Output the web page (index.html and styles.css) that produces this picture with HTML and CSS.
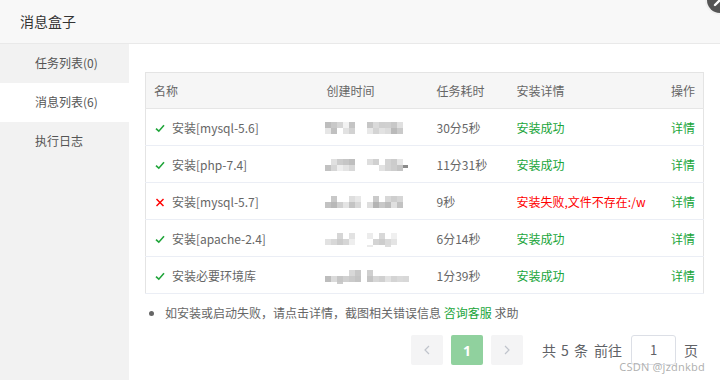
FILE: index.html
```html
<!DOCTYPE html>
<html lang="zh-CN">
<head>
<meta charset="utf-8">
<title>消息盒子</title>
<link rel="stylesheet" href="styles.css">
</head>
<body>
<div class="dialog">
  <div class="header">消息盒子</div>
  <div class="close"><svg width="26" height="26" viewBox="0 0 26 26"><line x1="8" y1="18" x2="18" y2="8" stroke="#fff" stroke-width="2.4" stroke-linecap="round"/><line x1="8" y1="8" x2="18" y2="18" stroke="#fff" stroke-width="2.4" stroke-linecap="round"/></svg></div>
  <div class="body">
    <ul class="side">
      <li class="side-item">任务列表(0)</li>
      <li class="side-item active">消息列表(6)</li>
      <li class="side-item">执行日志</li>
    </ul>
    <div class="main">
      <table class="tbl">
        <colgroup><col class="c1"><col class="c2"><col class="c3"><col class="c4"><col class="c5"></colgroup>
        <thead>
          <tr><th>名称</th><th>创建时间</th><th>任务耗时</th><th>安装详情</th><th class="r">操作</th></tr>
        </thead>
        <tbody>
          <tr>
            <td><svg class="ic" width="10" height="9" viewBox="0 0 10 9"><polyline points="1,4.6 3.8,7.2 9,1.2" fill="none" stroke="#20a53a" stroke-width="1.6"/></svg>安装[mysql-5.6]</td>
            <td><svg class="blur" width="84" height="14" viewBox="0 0 84 14"><rect x="0" y="0" width="6" height="6" fill="#bdbdbd"/><rect x="6" y="0" width="6" height="6" fill="#c8c8c8"/><rect x="12" y="0" width="6" height="6" fill="#d6d6d6"/><rect x="18" y="0" width="6" height="6" fill="#f2f2f2"/><rect x="24" y="0" width="6" height="6" fill="#c4c4c4"/><rect x="0" y="6" width="6" height="6" fill="#e6e6e6"/><rect x="6" y="6" width="6" height="6" fill="#c0c0c0"/><rect x="18" y="6" width="6" height="6" fill="#e2e2e2"/><rect x="24" y="6" width="6" height="6" fill="#d2d2d2"/><rect x="42" y="0" width="6" height="6" fill="#c6c6c6"/><rect x="48" y="0" width="6" height="6" fill="#dadada"/><rect x="54" y="0" width="6" height="6" fill="#cfcfcf"/><rect x="60" y="0" width="6" height="6" fill="#d0d0d0"/><rect x="66" y="0" width="6" height="6" fill="#c8c8c8"/><rect x="72" y="0" width="6" height="6" fill="#e0e0e0"/><rect x="42" y="6" width="6" height="6" fill="#e8e8e8"/><rect x="48" y="6" width="6" height="6" fill="#d4d4d4"/><rect x="54" y="6" width="6" height="6" fill="#e2e2e2"/><rect x="60" y="6" width="6" height="6" fill="#dcdcdc"/><rect x="66" y="6" width="6" height="6" fill="#bababa"/><rect x="72" y="6" width="6" height="6" fill="#cacaca"/></svg></td>
            <td>30分5秒</td>
            <td class="ok">安装成功</td>
            <td class="r link">详情</td>
          </tr>
          <tr>
            <td><svg class="ic" width="10" height="9" viewBox="0 0 10 9"><polyline points="1,4.6 3.8,7.2 9,1.2" fill="none" stroke="#20a53a" stroke-width="1.6"/></svg>安装[php-7.4]</td>
            <td><svg class="blur" width="84" height="14" viewBox="0 0 84 14"><rect x="6" y="0" width="6" height="6" fill="#e0e0e0"/><rect x="12" y="0" width="6" height="6" fill="#cccccc"/><rect x="18" y="0" width="6" height="6" fill="#c6c6c6"/><rect x="24" y="0" width="6" height="6" fill="#bebebe"/><rect x="0" y="6" width="6" height="6" fill="#c2c2c2"/><rect x="6" y="6" width="6" height="6" fill="#d6d6d6"/><rect x="12" y="6" width="6" height="6" fill="#eeeeee"/><rect x="18" y="6" width="6" height="6" fill="#e4e4e4"/><rect x="24" y="6" width="6" height="6" fill="#d8d8d8"/><rect x="42" y="0" width="6" height="6" fill="#dedede"/><rect x="48" y="0" width="6" height="6" fill="#d0d0d0"/><rect x="60" y="0" width="6" height="6" fill="#d4d4d4"/><rect x="66" y="0" width="6" height="6" fill="#cccccc"/><rect x="72" y="0" width="6" height="6" fill="#e6e6e6"/><rect x="54" y="6" width="6" height="6" fill="#e2e2e2"/><rect x="60" y="6" width="6" height="6" fill="#d4d4d4"/><rect x="66" y="6" width="6" height="6" fill="#cdcdcd"/><rect x="72" y="6" width="6" height="6" fill="#c4c4c4"/><rect x="78" y="6" width="5" height="3" fill="#8a8a8a"/></svg></td>
            <td>11分31秒</td>
            <td class="ok">安装成功</td>
            <td class="r link">详情</td>
          </tr>
          <tr>
            <td><svg class="ic" width="10" height="9" viewBox="0 0 10 9"><line x1="1.5" y1="1" x2="8.5" y2="8" stroke="#f00" stroke-width="1.5"/><line x1="8.5" y1="1" x2="1.5" y2="8" stroke="#f00" stroke-width="1.5"/></svg>安装[mysql-5.7]</td>
            <td><svg class="blur" width="84" height="14" viewBox="0 0 84 14"><rect x="6" y="0" width="6" height="6" fill="#c8c8c8"/><rect x="24" y="0" width="6" height="6" fill="#dedede"/><rect x="30" y="0" width="6" height="6" fill="#e8e8e8"/><rect x="48" y="0" width="6" height="6" fill="#cacaca"/><rect x="60" y="0" width="6" height="6" fill="#d8d8d8"/><rect x="66" y="0" width="6" height="6" fill="#cecece"/><rect x="0" y="6" width="6" height="6" fill="#c2c2c2"/><rect x="6" y="6" width="6" height="6" fill="#b8b8b8"/><rect x="12" y="6" width="6" height="6" fill="#d0d0d0"/><rect x="18" y="6" width="6" height="6" fill="#e4e4e4"/><rect x="24" y="6" width="6" height="6" fill="#c4c4c4"/><rect x="30" y="6" width="6" height="6" fill="#d8d8d8"/><rect x="42" y="6" width="6" height="6" fill="#dedede"/><rect x="48" y="6" width="6" height="6" fill="#b4b4b4"/><rect x="54" y="6" width="6" height="6" fill="#c8c8c8"/><rect x="60" y="6" width="6" height="6" fill="#bcbcbc"/><rect x="66" y="6" width="6" height="6" fill="#e0e0e0"/><rect x="72" y="6" width="6" height="6" fill="#c2c2c2"/><rect x="72" y="0" width="6" height="6" fill="#d6d6d6"/></svg></td>
            <td>9秒</td>
            <td class="err"><div class="clip">安装失败,文件不存在:/w</div></td>
            <td class="r link">详情</td>
          </tr>
          <tr>
            <td><svg class="ic" width="10" height="9" viewBox="0 0 10 9"><polyline points="1,4.6 3.8,7.2 9,1.2" fill="none" stroke="#20a53a" stroke-width="1.6"/></svg>安装[apache-2.4]</td>
            <td><svg class="blur" width="84" height="14" viewBox="0 0 84 14"><rect x="12" y="0" width="6" height="6" fill="#d6d6d6"/><rect x="24" y="0" width="6" height="6" fill="#e2e2e2"/><rect x="0" y="6" width="6" height="6" fill="#e2e2e2"/><rect x="6" y="6" width="6" height="6" fill="#d8d8d8"/><rect x="12" y="6" width="6" height="6" fill="#cccccc"/><rect x="18" y="6" width="6" height="6" fill="#d6d6d6"/><rect x="24" y="6" width="6" height="6" fill="#eeeeee"/><rect x="42" y="0" width="6" height="6" fill="#ececec"/><rect x="54" y="0" width="6" height="6" fill="#d8d8d8"/><rect x="66" y="0" width="6" height="6" fill="#f0f0f0"/><rect x="48" y="6" width="6" height="6" fill="#d4d4d4"/><rect x="54" y="6" width="6" height="6" fill="#cdcdcd"/><rect x="60" y="6" width="6" height="6" fill="#dadada"/><rect x="66" y="6" width="6" height="6" fill="#e4e4e4"/><rect x="42" y="12" width="6" height="2" fill="#eaeaea"/><rect x="60" y="12" width="6" height="2" fill="#dddddd"/></svg></td>
            <td>6分14秒</td>
            <td class="ok">安装成功</td>
            <td class="r link">详情</td>
          </tr>
          <tr>
            <td><svg class="ic" width="10" height="9" viewBox="0 0 10 9"><polyline points="1,4.6 3.8,7.2 9,1.2" fill="none" stroke="#20a53a" stroke-width="1.6"/></svg>安装必要环境库</td>
            <td><svg class="blur" width="84" height="14" viewBox="0 0 84 14"><rect x="24" y="0" width="6" height="6" fill="#d8d8d8"/><rect x="30" y="0" width="6" height="6" fill="#c8c8c8"/><rect x="0" y="6" width="6" height="6" fill="#bdbdbd"/><rect x="6" y="6" width="6" height="6" fill="#dadada"/><rect x="12" y="6" width="6" height="6" fill="#c6c6c6"/><rect x="18" y="6" width="6" height="6" fill="#d0d0d0"/><rect x="24" y="6" width="6" height="6" fill="#cacaca"/><rect x="30" y="6" width="6" height="6" fill="#c4c4c4"/><rect x="12" y="12" width="6" height="2" fill="#cccccc"/><rect x="42" y="0" width="6" height="6" fill="#cfcfcf"/><rect x="42" y="6" width="6" height="6" fill="#c4c4c4"/><rect x="48" y="6" width="6" height="6" fill="#d6d6d6"/><rect x="54" y="6" width="6" height="6" fill="#d0d0d0"/><rect x="60" y="6" width="6" height="6" fill="#e2e2e2"/><rect x="66" y="6" width="6" height="6" fill="#d4d4d4"/><rect x="72" y="6" width="6" height="6" fill="#dadada"/><rect x="78" y="6" width="6" height="6" fill="#d8d8d8"/></svg></td>
            <td>1分39秒</td>
            <td class="ok">安装成功</td>
            <td class="r link">详情</td>
          </tr>
        </tbody>
      </table>
      <ul class="notes">
        <li>如安装或启动失败，请点击详情，截图相关错误信息 <span class="green">咨询客服</span> 求助</li>
      </ul>
      <div class="pager">
        <button class="pg-btn"><svg width="8" height="10" viewBox="0 0 8 10"><polyline points="6,1 2,5 6,9" fill="none" stroke="#c0c4cc" stroke-width="1.2"/></svg></button>
        <button class="pg-btn pg-cur">1</button>
        <button class="pg-btn"><svg width="8" height="10" viewBox="0 0 8 10"><polyline points="2,1 6,5 2,9" fill="none" stroke="#c0c4cc" stroke-width="1.2"/></svg></button>
        <span class="pg-total">共 5 条</span>
        <span class="pg-goto">前往</span>
        <span class="pg-input">1</span>
        <span class="pg-unit">页</span>
      </div>
    </div>
  </div>
  <div class="watermark">CSDN @jzdnkbd</div>
</div>
</body>
</html>
```

FILE: styles.css
```css
* { box-sizing: border-box; }
html, body { margin: 0; padding: 0; }
body {
  width: 720px;
  height: 380px;
  overflow: hidden;
  font-family: "Noto Sans CJK SC", "Noto Sans", sans-serif;
  font-size: 12px;
  color: #666;
  background: #fff;
}
.dialog {
  position: relative;
  width: 720px;
  height: 380px;
  display: flex;
  flex-direction: column;
}
.header {
  height: 44px;
  flex: none;
  background: #f8f8f8;
  border-bottom: 1px solid #e9e9e9;
  padding-left: 20px;
  line-height: 43px;
  font-size: 14px;
  color: #333;
}
.close {
  position: absolute;
  top: -13px;
  right: -13px;
  width: 26px;
  height: 26px;
  border-radius: 50%;
  background: #555;
  box-shadow: 0 0 0 2px #f0f0f0;
}
.close svg { display: block; }
.body {
  flex: 1;
  display: flex;
  min-height: 0;
}
.side {
  list-style: none;
  margin: 0;
  padding: 0;
  width: 129px;
  flex: none;
  background: #f2f2f2;
}
.side-item {
  height: 39px;
  line-height: 38px;
  padding-left: 35px;
  color: #555;
}
.side-item.active { background: #fff; }
.main {
  flex: 1;
  padding: 28px 17px 0 16px;
  display: flex;
  flex-direction: column;
}
.tbl {
  width: 558px;
  table-layout: fixed;
  border-collapse: collapse;
  border: 1px solid #e4e4e4;
}
.c1 { width: 173px; }
.c2 { width: 110px; }
.c3 { width: 80px; }
.c4 { width: 149px; }
.c5 { width: 46px; }
.tbl th, .tbl td {
  height: 37px;
  padding: 0 8px;
  text-align: left;
  font-weight: normal;
  white-space: nowrap;
  overflow: hidden;
  border-bottom: 1px solid #ebeef5;
  color: #666;
}
.tbl th { background: #f6f6f6; height: 36px; border-bottom-color: #e6e6e6; }
.tbl .r { text-align: right; }
.tbl td.ok, .tbl td.link { color: #20a53a; }
.tbl td.err { color: #f00; }
.clip { width: 131px; overflow: hidden; white-space: nowrap; }
.ic { vertical-align: middle; margin: 0 7px 2px 1px; }
.blur { vertical-align: middle; margin-left: -2px; }
.notes {
  margin: 10px 0 0 0;
  padding: 0 0 0 20px;
  color: #666;
  line-height: 18px;
}
.green { color: #20a53a; }
.pager {
  margin-top: 13px;
  display: flex;
  align-items: center;
  justify-content: flex-end;
  padding-right: 6px;
  height: 30px;
  font-size: 14px;
  color: #606266;
}
.pg-btn {
  width: 32px;
  height: 30px;
  border: none;
  border-radius: 2px;
  background: #f4f4f5;
  margin-left: 8px;
  padding: 0;
  display: flex;
  align-items: center;
  justify-content: center;
  font-family: "Noto Sans", sans-serif;
  font-weight: bold;
  font-size: 14px;
  color: #fff;
}
.pg-btn:first-child { margin-left: 0; }
.pg-cur { background: #90d19e; }
.pg-total { margin-left: 19px; word-spacing: 2px; }
.pg-goto { margin-left: 6px; }
.pg-input {
  margin-left: 9px;
  width: 45px;
  height: 30px;
  border: 1px solid #dcdfe6;
  border-radius: 3px;
  text-align: center;
  line-height: 28px;
  font-size: 13px;
}
.pg-unit { margin-left: 8px; }
.watermark {
  position: absolute;
  right: 15px;
  bottom: 6px;
  font-family: "Noto Sans", sans-serif;
  font-size: 11px;
  color: rgba(150,150,150,0.75);
  text-shadow: 0 0 1px #fff;
  letter-spacing: 0.2px;
}
```
